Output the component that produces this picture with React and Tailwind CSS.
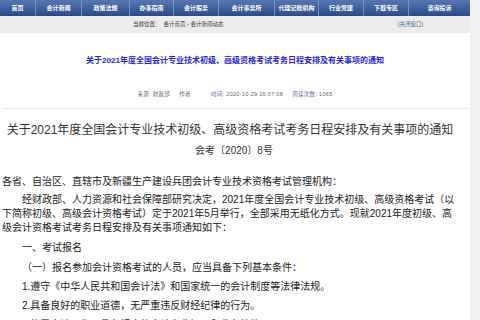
import React from "react";

const navItems = [
  { t: "首页", w: "w-[36px]" },
  { t: "会计新闻", w: "w-[46px]" },
  { t: "政策法规", w: "w-[48px]" },
  { t: "办事指南", w: "w-[44px]" },
  { t: "会计服务", w: "w-[45px]" },
  { t: "会计事务所", w: "w-[56px]" },
  { t: "代理记账机构", w: "w-[44px]" },
  { t: "行业党建", w: "w-[45px]" },
  { t: "下载专区", w: "w-[45px]" },
  { t: "咨询投诉", w: "w-[61px]" },
];

export default function App() {
  return (
    <div
      className="min-h-screen bg-[#f0f0f0]"
      style={{ fontFamily: '"Liberation Sans", "Noto Sans CJK SC", sans-serif' }}
    >
      <div className="w-[470px] bg-white min-h-[320px]">
        <nav className="flex h-[16px] bg-gradient-to-b from-[#5677b3] to-[#2b4b85]">
          {navItems.map((n, i) => (
            <div
              key={i}
              className={`${n.w} flex items-center justify-center whitespace-nowrap overflow-hidden text-[6px] font-bold text-white ${
                i < navItems.length - 1 ? "border-r border-[#7590c2]" : ""
              }`}
            >
              {n.t}
            </div>
          ))}
        </nav>
        <div className="flex h-[17px] items-center bg-[#ececec] text-[5.5px]">
          <div className="ml-[133px] text-[#333]">
            当前位置：&nbsp;&nbsp;会计首页&nbsp;›&nbsp;会计新闻动态
          </div>
          <div className="ml-auto mr-[47px] text-[#4a6590]">[关闭窗口]</div>
        </div>
        <h1 className="mt-[23px] text-center text-[8px] leading-[10px] font-bold text-[#1f1ff0]">
          关于2021年度全国会计专业技术初级、高级资格考试考务日程安排及有关事项的通知
        </h1>
        <div className="mt-[24px] text-center text-[5.5px] leading-[8px] text-[#666] whitespace-pre tracking-[0.3px]">
          <span className="text-[#5b6f9a]">来源:</span> 财政部{"     "}作者:{"          "}
          <span className="text-[#5b6f9a]">时间:</span> 2020-10-29 16:07:08{"     "}
          <span className="text-[#5b6f9a]">阅读次数:</span> 1065
        </div>
        <div className="mx-[2px] mt-[10px] h-px bg-[#e6e6e6]" />
        <div className="pl-[2px] pr-[12px] text-[#222]">
          <h2 className="mt-[13px] whitespace-nowrap text-center text-[12px] leading-[16px] text-[#333] -mx-[2px]">
            关于2021年度全国会计专业技术初级、高级资格考试考务日程安排及有关事项的通知
          </h2>
          <p className="mt-[6px] text-center text-[10px] leading-[14px] text-[#333] pl-[8px]">
            会考〔2020〕8号
          </p>
          <div className="mt-[17px] text-[10px] leading-[14px]">
            <p className="mb-[4px]">
              各省、自治区、直辖市及新疆生产建设兵团会计专业技术资格考试管理机构：
            </p>
            <p className="mb-[6px] indent-[20px]">
              经财政部、人力资源和社会保障部研究决定，2021年度全国会计专业技术初级、高级资格考试（以下简称初级、高级会计资格考试）定于2021年5月举行，全部采用无纸化方式。现就2021年度初级、高级会计资格考试考务日程安排及有关事项通知如下：
            </p>
            <p className="mb-[6px] indent-[20px]">一、考试报名</p>
            <p className="mb-[5px] indent-[20px]">
              （一）报名参加会计资格考试的人员，应当具备下列基本条件：
            </p>
            <p className="mb-[5px] indent-[20px]">
              1.遵守《中华人民共和国会计法》和国家统一的会计制度等法律法规。
            </p>
            <p className="mb-[5px] indent-[20px]">
              2.具备良好的职业道德，无严重违反财经纪律的行为。
            </p>
            <p className="mb-[5px] indent-[20px]">
              3.热爱会计工作，具备相应的会计专业知识和业务技能。
            </p>
          </div>
        </div>
      </div>
    </div>
  );
}
